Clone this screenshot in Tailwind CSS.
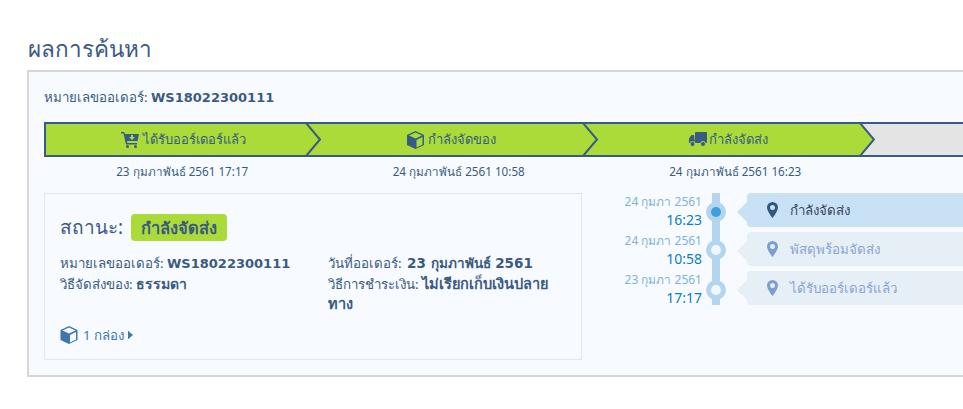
<!DOCTYPE html>
<html lang="th">
<head>
  <meta charset="UTF-8">
  <title>ผลการค้นหา</title>
  <script src="https://cdn.jsdelivr.net/npm/@tailwindcss/browser@4"></script>
</head>
<body class="h-[409px] w-[963px] overflow-hidden bg-white font-['Noto_Sans','DejaVu_Sans',sans-serif] text-[#3b5a82]">

  <div class="pl-[27px] pt-[36px]">
    <h2 class="ml-px h-[34px] text-[22.500px] leading-[26px]">ผลการค้นหา</h2>

    <div class="h-[307px] w-[1100px] border-2 border-[#d6d6d6] bg-[#f7fbff] px-[15px] pt-[16px]">
      <p class="h-[34px] text-[13.300px] leading-[18px]">หมายเลขออเดอร์: <b class="font-['DejaVu_Sans'] text-[13px]">WS18022300111</b></p>

      <!-- steps -->
      <div class="flex h-[35px] overflow-hidden border-y-2 border-l-2 border-[#375a86]">
        <div class="relative flex w-[275px] shrink-0 items-center justify-center gap-1 bg-[#abdb39] text-[13px]">
          <svg class="h-[16px] w-[18px]" viewBox="0 0 18 16" fill="#375a86"><path d="M0 0h3l1 2h14l-1.500 7H6l.4 2H16v1.500H5L2.500 1.500H0z"/><circle cx="6.500" cy="14.500" r="1.500"/><circle cx="14.500" cy="14.500" r="1.500"/><path d="M10 3h2v2h2l-3 3-3-3h2z" fill="#abdb39"/></svg>
          <span>ได้รับออร์เดอร์แล้ว</span>
          <svg class="absolute right-0 top-0 h-[31px] w-[16px] overflow-visible" viewBox="0 0 16 31"><path d="M1-1L15 15.500 1 32" fill="#abdb39" stroke="#375a86" stroke-width="2"/></svg>
        </div>
        <div class="relative flex w-[277px] shrink-0 items-center justify-center gap-1 bg-[#abdb39] pr-[16px] text-[13px]">
          <svg class="h-[18px] w-[17px]" viewBox="0 0 17 18"><path d="M8.500 0L17 4v10l-8.500 4L0 14V4z" fill="#375a86"/><path d="M8.500 1.500L15 4.500 8.500 7.500 2 4.500z" fill="#abdb39"/><path d="M9.500 9L15.500 6v7.500l-6 3z" fill="#abdb39"/></svg>
          <span>กำลังจัดของ</span>
          <svg class="absolute right-0 top-0 h-[31px] w-[16px] overflow-visible" viewBox="0 0 16 31"><path d="M1-1L15 15.500 1 32" fill="#abdb39" stroke="#375a86" stroke-width="2"/></svg>
        </div>
        <div class="relative flex w-[277px] shrink-0 items-center justify-center gap-0.5 bg-[#abdb39] pr-[16px] text-[13px]">
          <svg class="h-[15px] w-[18px]" viewBox="0 0 18 15" fill="#375a86"><rect x="6" y="0" width="12" height="11" rx="1"/><path d="M5 3H2.500L0 6.500V11h6z"/><circle cx="3.500" cy="12" r="2.500" stroke="#abdb39"/><circle cx="14" cy="12" r="2.500" stroke="#abdb39"/></svg>
          <span>กำลังจัดส่ง</span>
          <svg class="absolute right-0 top-0 h-[31px] w-[16px] bg-[#e4e4e4]" viewBox="0 0 16 31"><path d="M0-1H1L15 15.500 1 32H0z" fill="#abdb39"/><path d="M1-1L15 15.500 1 32" fill="none" stroke="#375a86" stroke-width="2"/></svg>
        </div>
        <div class="flex-1 bg-[#e4e4e4]"></div>
      </div>
      <div class="flex h-[36px] pt-[6px] text-[11.700px] leading-[16px]">
        <span class="w-[276.500px] shrink-0 text-center">23 กุมภาพันธ์ 2561 17:17</span>
        <span class="w-[276.500px] shrink-0 text-center">24 กุมภาพันธ์ 2561 10:58</span>
        <span class="w-[276.500px] shrink-0 text-center">24 กุมภาพันธ์ 2561 16:23</span>
      </div>

      <div class="flex">
        <!-- status card -->
        <div class="h-[167px] w-[538px] shrink-0 border border-[#e1e7ed] px-[15px] pt-[20px]">
          <div class="flex h-[27px] items-center gap-[8px]">
            <span class="text-[19px]">สถานะ:</span>
            <span class="rounded-[4px] bg-[#abdb39] px-[10px] py-[3px] text-[16.500px] font-semibold leading-[21px]">กำลังจัดส่ง</span>
          </div>
          <div class="mt-[13px] grid grid-cols-[268px_1fr] text-[13.300px] leading-[19.500px]">
            <div>
              <p>หมายเลขออเดอร์: <b class="font-['DejaVu_Sans'] text-[13px]">WS18022300111</b></p>
              <p>วิธีจัดส่งของ: <b class="text-[14px]">ธรรมดา</b></p>
            </div>
            <div class="pr-[10px]">
              <p>วันที่ออเดอร์: <b class="ml-[2px] font-['DejaVu_Sans'] text-[13.500px]">23 กุมภาพันธ์ 2561</b></p>
              <p>วิธีการชำระเงิน: <b class="text-[14.500px]">ไม่เรียกเก็บเงินปลายทาง</b></p>
            </div>
          </div>
          <div class="mt-[11px] flex items-center gap-[5px] text-[13.300px] text-[#3e77ad]">
            <svg class="h-[18px] w-[18px]" viewBox="0 0 17 18"><path d="M8.500 0L17 4v10l-8.500 4L0 14V4z" fill="#3e77ad"/><path d="M8.500 1.500L15 4.500 8.500 7.500 2 4.500z" fill="#f7fbff"/><path d="M9.500 9L15.500 6v7.500l-6 3z" fill="#f7fbff"/></svg>
            <span>1 กล่อง</span>
            <svg class="-ml-[1px] h-[10px] w-[5px]" viewBox="0 0 6 10" fill="#3e77ad"><path d="M0 0l6 5-6 5z"/></svg>
          </div>
        </div>

        <!-- timeline -->
        <div class="relative ml-[30px] flex w-[500px] flex-col gap-[5px]">
          <div class="absolute left-[100px] top-0 h-[112px] w-[8px] bg-[#b4d5ef]"></div>

          <div class="flex h-[34px]">
            <div class="w-[90px] text-right text-[#7fb2dc]"><p class="text-[12px] leading-[17px]">24 กุมภา 2561</p><p class="text-[14px] leading-[19px] text-[#0f7cc4]">16:23</p></div>
            <div class="relative z-10 ml-[4px] mt-[9px] flex h-[20px] w-[20px] items-center justify-center rounded-full bg-[#b4d5ef]"><i class="h-[10px] w-[10px] rounded-full bg-[#3d9fdc]"></i></div>
            <div class="relative ml-[21px] flex w-[300px] items-center gap-[12px] rounded-[4px] bg-[#c9e1f4] pl-[20px] pt-[2px] text-[13.300px] text-[#35465c]">
              <i class="absolute left-[-10px] top-[9px] h-0 w-0 border-y-[10px] border-r-[10px] border-y-transparent border-r-[#c9e1f4]"></i>
              <svg class="-mt-[2px] h-[16px] w-[11px]" viewBox="0 0 11 16"><path fill-rule="evenodd" d="M5.500 0A5.500 5.500 0 0 1 11 5.500C11 8 8 13 5.500 16 3 13 0 8 0 5.500A5.500 5.500 0 0 1 5.500 0zm0 3a2.500 2.500 0 1 0 0 5 2.500 2.500 0 0 0 0-5z" fill="#33557f"/></svg>
              <span>กำลังจัดส่ง</span>
            </div>
          </div>

          <div class="flex h-[34px]">
            <div class="w-[90px] text-right text-[#7fb2dc]"><p class="text-[12px] leading-[17px]">24 กุมภา 2561</p><p class="text-[14px] leading-[19px] text-[#0f7cc4]">10:58</p></div>
            <div class="relative z-10 ml-[4px] mt-[8px] flex h-[20px] w-[20px] items-center justify-center rounded-full bg-[#b4d5ef]"><i class="h-[10px] w-[10px] rounded-full bg-[#f0f7fd]"></i></div>
            <div class="relative ml-[21px] flex w-[300px] items-center gap-[12px] rounded-[4px] bg-[#e6eef6] pl-[20px] pt-[2px] text-[13.300px] text-[#8aa6d4]">
              <i class="absolute left-[-10px] top-[9px] h-0 w-0 border-y-[10px] border-r-[10px] border-y-transparent border-r-[#e6eef6]"></i>
              <svg class="-mt-[2px] h-[16px] w-[11px]" viewBox="0 0 11 16"><path fill-rule="evenodd" d="M5.500 0A5.500 5.500 0 0 1 11 5.500C11 8 8 13 5.500 16 3 13 0 8 0 5.500A5.500 5.500 0 0 1 5.500 0zm0 3a2.500 2.500 0 1 0 0 5 2.500 2.500 0 0 0 0-5z" fill="#7b9fd0"/></svg>
              <span>พัสดุพร้อมจัดส่ง</span>
            </div>
          </div>

          <div class="flex h-[34px]">
            <div class="w-[90px] text-right text-[#7fb2dc]"><p class="text-[12px] leading-[17px]">23 กุมภา 2561</p><p class="text-[14px] leading-[19px] text-[#0f7cc4]">17:17</p></div>
            <div class="relative z-10 ml-[4px] mt-[9px] flex h-[20px] w-[20px] items-center justify-center rounded-full bg-[#b4d5ef]"><i class="h-[10px] w-[10px] rounded-full bg-[#f0f7fd]"></i></div>
            <div class="relative ml-[21px] flex w-[300px] items-center gap-[12px] rounded-[4px] bg-[#e6eef6] pl-[20px] pt-[2px] text-[13.300px] text-[#8aa6d4]">
              <i class="absolute left-[-10px] top-[9px] h-0 w-0 border-y-[10px] border-r-[10px] border-y-transparent border-r-[#e6eef6]"></i>
              <svg class="-mt-[2px] h-[16px] w-[11px]" viewBox="0 0 11 16"><path fill-rule="evenodd" d="M5.500 0A5.500 5.500 0 0 1 11 5.500C11 8 8 13 5.500 16 3 13 0 8 0 5.500A5.500 5.500 0 0 1 5.500 0zm0 3a2.500 2.500 0 1 0 0 5 2.500 2.500 0 0 0 0-5z" fill="#7b9fd0"/></svg>
              <span>ได้รับออร์เดอร์แล้ว</span>
            </div>
          </div>
        </div>
      </div>
    </div>
  </div>
</body>
</html>
